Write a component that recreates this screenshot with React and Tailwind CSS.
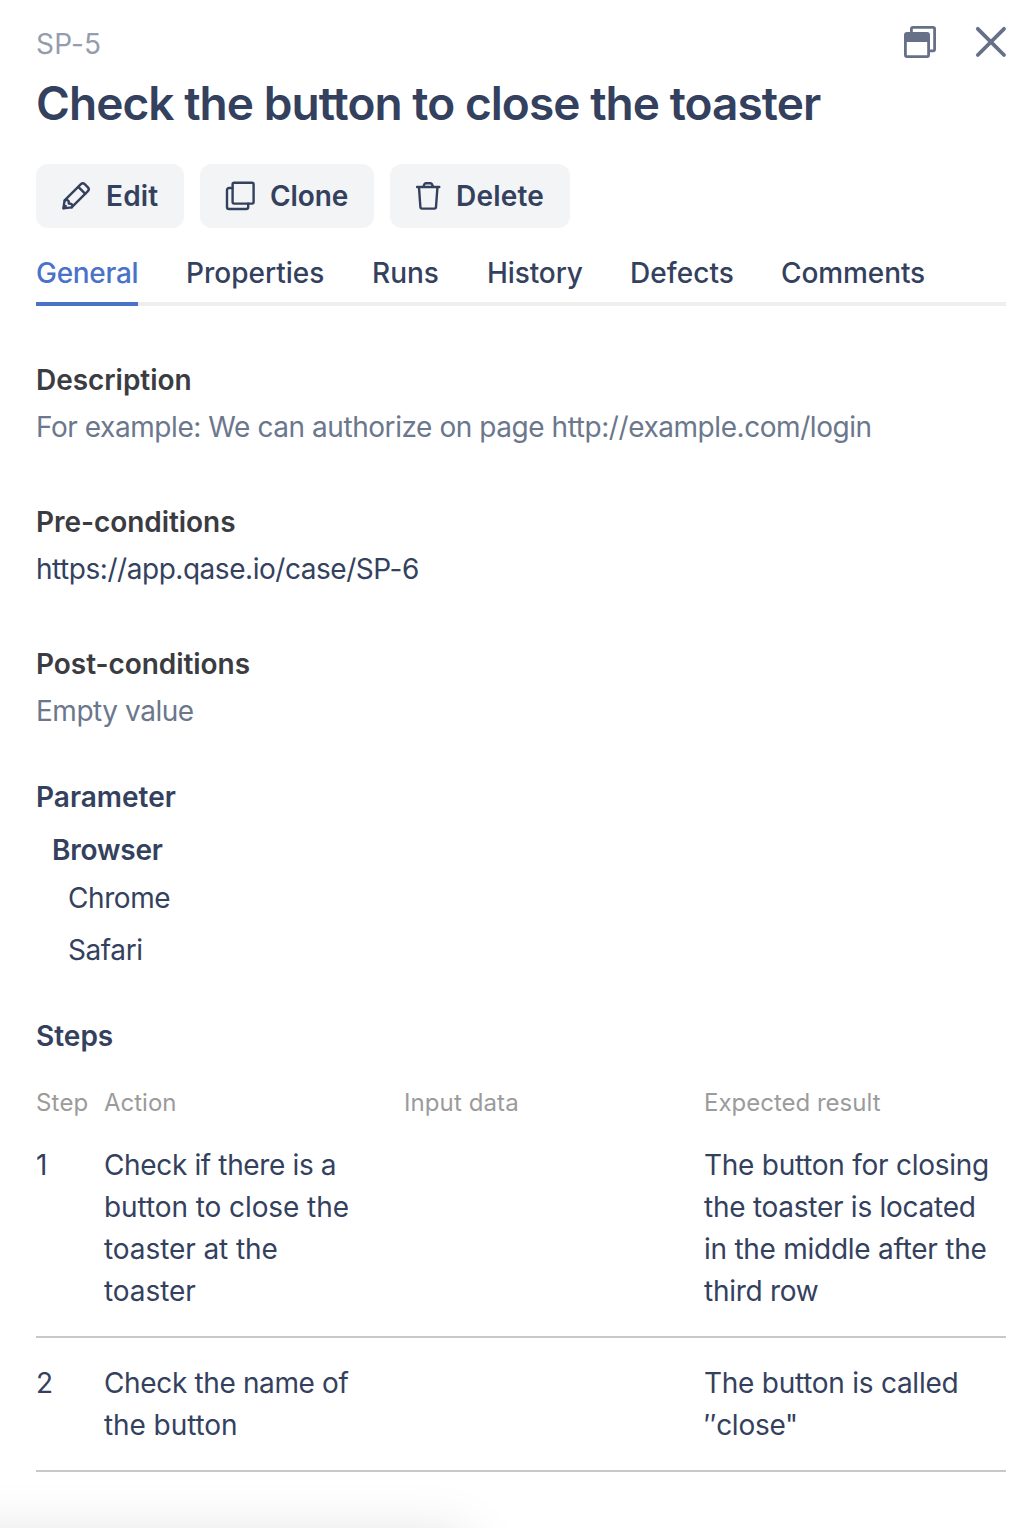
const tabs = [
  { label: "General", cls: "w-[102px] tracking-[-0.3px] text-[#4b72c9]" },
  { label: "Properties", cls: "w-[138px]" },
  { label: "Runs", cls: "w-[67px]" },
  { label: "History", cls: "w-[95px] tracking-[-0.1px]" },
  { label: "Defects", cls: "w-[103px] tracking-[0.05px]" },
  { label: "Comments", cls: "w-[145px] tracking-[-0.1px]" },
];

const steps = [
  {
    n: "1",
    action: ["Check if there is a", "button to close the", "toaster at the", "toaster"],
    result: ["The button for closing", "the toaster is located", "in the middle after the", "third row"],
  },
  { n: "2", action: ["Check the name of", "the button"], result: ["The button is called", "″close\""] },
];

function PencilIcon() {
  return (
    <svg width="32" height="32" viewBox="0 0 32 32" fill="none" stroke="currentColor" strokeWidth="2.4" strokeLinejoin="round" strokeLinecap="round" aria-hidden="true">
      <path d="M3.4 28.4 4.6 20.4 20.9 4.2a2.7 2.7 0 0 1 3.8 0l3.2 3.2a2.7 2.7 0 0 1 0 3.8L11.6 27.4z" />
      <path d="M18.3 6.9 25.3 13.8" />
      <path d="M4.8 20.6l2-1 1.9 1.500v2.400l2.500.4 1.400 1.500-.8 2" />
      <path d="M3.600 28.200l2.200-2.200" />
    </svg>
  );
}

function CloneIcon() {
  return (
    <svg width="32" height="32" viewBox="0 0 32 32" fill="none" stroke="currentColor" strokeWidth="2.4" strokeLinejoin="round" strokeLinecap="round" aria-hidden="true">
      <rect x="8.6" y="2.8" width="21" height="20.8" rx="1.6" />
      <path d="M8.6 8H5a2 2 0 0 0-2 2v17a2 2 0 0 0 2 2h17.2a2 2 0 0 0 2-2V23.600" />
    </svg>
  );
}

function TrashIcon() {
  return (
    <svg width="32" height="32" viewBox="0 0 32 32" fill="none" stroke="currentColor" strokeWidth="2.4" strokeLinejoin="round" strokeLinecap="round" aria-hidden="true">
      <path d="M5.200 7h22" strokeWidth="2.6" />
      <path d="M11.4 6.6l1-2.4a1.600 1.600 0 0 1 1.500-1h4.600a1.600 1.600 0 0 1 1.500 1l1 2.400" />
      <path d="M7 7.600l1.400 19.400a1.700 1.700 0 0 0 1.700 1.600h12.200a1.700 1.700 0 0 0 1.700-1.600L25.400 7.600" />
    </svg>
  );
}

function WindowIcon() {
  return (
    <svg width="34" height="34" viewBox="0 0 34 34" fill="none" stroke="currentColor" strokeWidth="2.8" strokeLinejoin="round" aria-hidden="true">
      <path d="M7.400 7V3A1.600 1.600 0 0 1 9 1.400H29A1.600 1.600 0 0 1 30.600 3v20.200a1.600 1.600 0 0 1-1.600 1.600H26" />
      <rect x="1.400" y="7.400" width="23.200" height="23.200" rx="1.600" />
      <path d="M1.400 8h23.200v8H1.400z" fill="currentColor" stroke="none" />
    </svg>
  );
}

function CloseIcon() {
  return (
    <svg width="32" height="32" viewBox="0 0 32 32" fill="none" stroke="currentColor" strokeWidth="3.8" strokeLinecap="round" aria-hidden="true">
      <path d="M2.800 2.800 29 29M29 2.800 2.800 29" />
    </svg>
  );
}

function ActionButton({ icon, label, className }) {
  return (
    <button className={"flex h-16 items-center rounded-xl bg-[#f3f4f6] font-semibold " + className}>
      {icon}
      <span>{label}</span>
    </button>
  );
}

function Lines({ lines, className }) {
  return (
    <div className={"whitespace-nowrap " + className}>
      {lines.map((line) => (
        <span key={line} className={line.startsWith("Check") ? "block tracking-[-0.36px]" : "block"}>{line}</span>
      ))}
    </div>
  );
}

export default function App() {
  return (
    <main className="relative h-[1528px] w-[1036px] overflow-hidden bg-white pl-9 pr-[30px] pt-[23px] font-['Inter',sans-serif] text-[28px] leading-[42px] text-[#34415e]">
      <header className="flex h-[50px] justify-between">
        <span className="tracking-[0.2px] text-[#949cad]">SP-5</span>
        <div className="-mr-[1px] flex gap-[37px] pt-[3px] text-[#667087]">
          <button className="h-[34px]" aria-label="Open in window"><WindowIcon /></button>
          <button className="h-8" aria-label="Close"><CloseIcon /></button>
        </div>
      </header>
      <h1 className="h-[60px] whitespace-nowrap text-[46px] font-semibold leading-[60px] tracking-[-0.94px]">Check the button to close the toaster</h1>

      <div className="mt-[31px] flex gap-4">
        <ActionButton icon={<PencilIcon />} label="Edit" className="w-[148px] gap-[14px] pl-6 tracking-[0.2px]" />
        <ActionButton icon={<CloneIcon />} label="Clone" className="w-[174px] gap-[14px] pl-6 tracking-[-0.1px]" />
        <ActionButton icon={<TrashIcon />} label="Delete" className="w-[180px] gap-3 pl-[22px] tracking-[0.2px]" />
      </div>

      <nav className="mt-6 flex h-[54px] gap-12 whitespace-nowrap border-b-4 border-[#efefef] font-medium">
        {tabs.map((t, i) => (
          <a key={t.label} className={(i === 0 ? "h-[54px] border-b-4 border-[#4b72c9] " : "h-[50px] ") + t.cls}>{t.label}</a>
        ))}
      </nav>

      <section className="mt-[53px]">
        <h2 className="font-semibold tracking-[-0.05px] text-[#3b3c41]">Description</h2>
        <p className="mt-[5px] tracking-[-0.44px] text-[#6b778c]">For example: We can authorize on page http://example.com/login</p>
      </section>
      <section className="mt-[53px]">
        <h2 className="font-semibold tracking-[-0.05px] text-[#3b3c41]">Pre-conditions</h2>
        <p className="mt-[5px] tracking-[-0.46px]">https://app.qase.io/case/SP-6</p>
      </section>
      <section className="mt-[53px]">
        <h2 className="font-semibold tracking-[-0.05px] text-[#3b3c41]">Post-conditions</h2>
        <p className="mt-[5px] tracking-[-0.47px] text-[#6b778c]">Empty value</p>
      </section>

      <section className="mt-11">
        <h2 className="font-semibold">Parameter</h2>
        <h3 className="mt-[11px] pl-4 font-semibold tracking-[-0.2px]">Browser</h3>
        <ul className="mt-[6px] flex flex-col gap-[10px] pl-8 tracking-[-0.42px]">
          <li>Chrome</li>
          <li>Safari</li>
        </ul>
      </section>

      <section className="mt-11">
        <h2 className="font-semibold">Steps</h2>
        <div className="mt-[29px] grid grid-cols-[68px_300px_300px_302px] text-[24px] leading-[34px] text-[#9b9b9b]">
          <span className="tracking-[0.2px]">Step</span>
          <span>Action</span>
          <span className="tracking-[0.1px]">Input data</span>
          <span>Expected result</span>
        </div>
        {steps.map((s) => (
          <div key={s.n} className="grid grid-cols-[68px_300px_300px_302px] border-b-2 border-[#c8c8c8] py-6">
            <span>{s.n}</span>
            <Lines lines={s.action} className="tracking-[-0.08px]" />
            <span />
            <Lines lines={s.result} className="tracking-[-0.26px]" />
          </div>
        ))}
      </section>

      <div className="absolute left-[-100px] top-[1540px] h-[200px] w-[565px] shadow-[0_0_55px_rgba(0,0,0,0.15)]" />
    </main>
  );
}
